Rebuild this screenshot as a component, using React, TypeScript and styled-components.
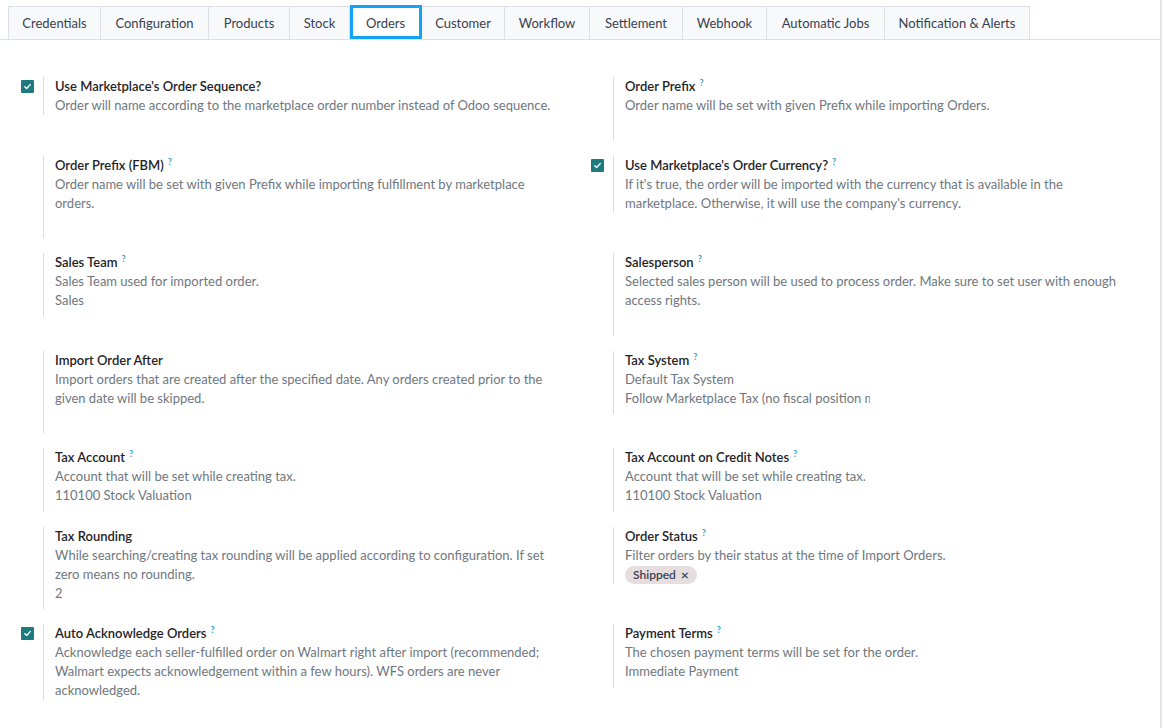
import React from "react";
import styled, { createGlobalStyle } from "styled-components";

const GlobalStyle = createGlobalStyle`
   html, body {
      margin: 0;
      padding: 0;
      background: #ffffff;
   }

   body {
      font-family: Lato, "Noto Sans", sans-serif;
      font-size: 13px;
      color: #1f2937;
   }
`;

const Sheet = styled.div`
   width: 1160px;
   min-height: 728px;
   border-right: 2px solid #e4e4ec;
   background: #ffffff;
`;

const TabBar = styled.div`
   display: flex;
   padding: 6px 0 0 8px;
   border-bottom: 1px solid #dcdfe3;
`;

const Tab = styled.div<{ $active?: boolean; $width: number }>`
   display: flex;
   align-items: center;
   justify-content: center;
   width: ${(p) => p.$width}px;
   height: 33px;
   box-sizing: border-box;
   border-top: 1px solid #dcdfe3;
   border-right: 1px solid #dcdfe3;
   background: ${(p) => (p.$active ? "#ffffff" : "#f8f9fa")};
   color: #374151;
   white-space: nowrap;
   cursor: pointer;

   &:first-child {
      border-left: 1px solid #dcdfe3;
   }

   ${(p) =>
      p.$active &&
      `
      outline: 3px solid #12a4f2;
      outline-offset: -3px;
      margin-top: -1px;
      height: 34px;
   `}
`;

const SettingsGrid = styled.div`
   display: grid;
   grid-template-columns: 570px 570px;
   row-gap: 15px;
   align-items: start;
   padding: 37px 0 24px 8px;
`;

const SettingBox = styled.div`
   display: flex;
`;

const LeftPane = styled.div`
   width: 35px;
   flex-shrink: 0;
   box-sizing: border-box;
   padding: 3px 0 0 13px;
`;

const CheckBox = styled.span`
   display: flex;
   align-items: center;
   justify-content: center;
   width: 13px;
   height: 13px;
   border-radius: 1px;
   background: #1d7a7e;
`;

const RightPane = styled.div`
   flex: 1;
   border-left: 1px solid #dadcdf;
   padding: 0 14px 0 11px;
   line-height: 19px;
`;

const Label = styled.div`
   font-weight: 600;
   color: #1f2328;
`;

const Help = styled.sup`
   margin-left: 4px;
   font-size: 9px;
   font-weight: 700;
   color: #2a9fd1;
   vertical-align: 5px;
   line-height: 0;
`;

const Description = styled.div`
   color: #6f7780;
`;

const Field = styled.div<{ $width?: number }>`
   height: 25.5px;
   color: #6f7780;
   white-space: nowrap;
   overflow: hidden;
   width: ${(p) => (p.$width ? `${p.$width}px` : "auto")};
`;

const Tag = styled.span`
   display: inline-flex;
   align-items: center;
   gap: 5px;
   height: 18px;
   margin-top: 1px;
   padding: 0 8px;
   border-radius: 9px;
   background: #e6dede;
   color: #374151;
   font-size: 12px;
   font-weight: 600;
   line-height: 18px;
`;

const TagClose = styled.span`
   font-weight: 600;
   font-size: 14px;
`;

interface Setting {
   label: string;
   help?: boolean;
   checked?: boolean;
   desc: string;
   value?: string;
   empty?: boolean;
   select?: string;
   tag?: string;
}

const tabs: [string, number][] = [
   ["Credentials", 93],
   ["Configuration", 108],
   ["Products", 81],
   ["Stock", 60],
   ["Orders", 72],
   ["Customer", 83],
   ["Workflow", 85],
   ["Settlement", 93],
   ["Webhook", 84],
   ["Automatic Jobs", 118],
   ["Notification & Alerts", 145],
];

// left / right pairs, row by row
const settings: Setting[] = [
   {
      label: "Use Marketplace's Order Sequence?",
      checked: true,
      desc: "Order will name according to the marketplace order number instead of Odoo sequence.",
   },
   {
      label: "Order Prefix",
      help: true,
      desc: "Order name will be set with given Prefix while importing Orders.",
      empty: true,
   },
   {
      label: "Order Prefix (FBM)",
      help: true,
      desc: "Order name will be set with given Prefix while importing fulfillment by marketplace orders.",
      empty: true,
   },
   {
      label: "Use Marketplace's Order Currency?",
      help: true,
      checked: true,
      desc: "If it's true, the order will be imported with the currency that is available in the marketplace. Otherwise, it will use the company's currency.",
   },
   {
      label: "Sales Team",
      help: true,
      desc: "Sales Team used for imported order.",
      value: "Sales",
   },
   {
      label: "Salesperson",
      help: true,
      desc: "Selected sales person will be used to process order. Make sure to set user with enough access rights.",
      empty: true,
   },
   {
      label: "Import Order After",
      desc: "Import orders that are created after the specified date. Any orders created prior to the given date will be skipped.",
      empty: true,
   },
   {
      label: "Tax System",
      help: true,
      desc: "Default Tax System",
      select: "Follow Marketplace Tax (no fiscal position mapping)",
   },
   {
      label: "Tax Account",
      help: true,
      desc: "Account that will be set while creating tax.",
      value: "110100 Stock Valuation",
   },
   {
      label: "Tax Account on Credit Notes",
      help: true,
      desc: "Account that will be set while creating tax.",
      value: "110100 Stock Valuation",
   },
   {
      label: "Tax Rounding",
      desc: "While searching/creating tax rounding will be applied according to configuration. If set zero means no rounding.",
      value: "2",
   },
   {
      label: "Order Status",
      help: true,
      desc: "Filter orders by their status at the time of Import Orders.",
      tag: "Shipped",
   },
   {
      label: "Auto Acknowledge Orders",
      help: true,
      checked: true,
      desc: "Acknowledge each seller-fulfilled order on Walmart right after import (recommended; Walmart expects acknowledgement within a few hours). WFS orders are never acknowledged.",
   },
   {
      label: "Payment Terms",
      help: true,
      desc: "The chosen payment terms will be set for the order.",
      value: "Immediate Payment",
   },
];

const Check: React.FC = () => (
   <svg width="9" height="9" viewBox="0 0 10 10">
      <path d="M2 5.2 L4.1 7.2 L8 2.9" fill="none" stroke="#ffffff" strokeWidth="1.6" strokeLinecap="round" strokeLinejoin="round" />
   </svg>
);

const SettingItem: React.FC<{ setting: Setting }> = ({ setting }) => {
   const { label, help, checked, desc, value, empty, select, tag } = setting;

   return (
      <SettingBox>
         <LeftPane>
            {checked && (
               <CheckBox>
                  <Check />
               </CheckBox>
            )}
         </LeftPane>
         <RightPane>
            <Label>
               {label}
               {help && <Help>?</Help>}
            </Label>
            <Description>{desc}</Description>
            {value && <Field>{value}</Field>}
            {empty && <Field />}
            {select && <Field $width={245}>{select}</Field>}
            {tag && (
               <Tag>
                  {tag}
                  <TagClose>×</TagClose>
               </Tag>
            )}
         </RightPane>
      </SettingBox>
   );
};

const App: React.FC = () => {
   return (
      <>
         <GlobalStyle />
         <Sheet>
            <TabBar>
               {tabs.map(([name, width]) => (
                  <Tab key={name} $width={width} $active={name === "Orders"}>
                     {name}
                  </Tab>
               ))}
            </TabBar>
            <SettingsGrid>
               {settings.map((s) => (
                  <SettingItem key={s.label} setting={s} />
               ))}
            </SettingsGrid>
         </Sheet>
      </>
   );
};

export default App;
